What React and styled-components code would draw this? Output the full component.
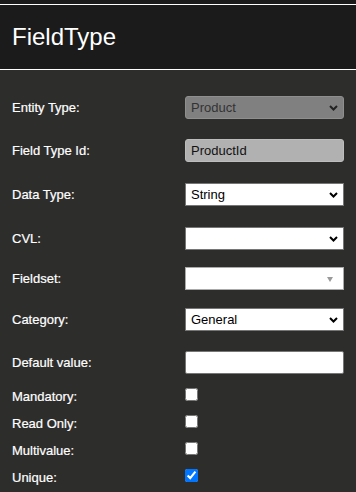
import React from 'react';
import styled, { createGlobalStyle } from 'styled-components';

const GlobalStyle = createGlobalStyle`
  html, body {
    margin: 0;
    padding: 0;
    background: #2d2d2b;
  }
  body {
    font-family: 'Liberation Sans', Arial, sans-serif;
    font-size: 13px;
    color: #fff;
  }
`;

const Page = styled.div`
  width: 356px;
  min-height: 492px;
  background: #2d2d2b;
  padding-top: 4px;
  box-sizing: border-box;
  background-image: linear-gradient(#1b1b1b, #1b1b1b);
  background-size: 100% 4px;
  background-repeat: no-repeat;
`;

const Header = styled.header`
  height: 64px;
  display: flex;
  align-items: center;
  padding: 0 12px;
  background: #1b1b1b;
  border-top: 1px solid #fff;
  border-bottom: 1px solid #fff;

  h1 {
    margin: 0;
    font-size: 24px;
    font-weight: normal;
    color: #fff;
  }
`;

const Form = styled.form`
  padding: 26px 12px 0 12px;
  display: flex;
  flex-direction: column;
`;

const Row = styled.div`
  display: flex;
  align-items: center;
  height: ${(p) => p.$height || 23}px;
  margin-top: ${(p) => p.$top || 0}px;
`;

const Label = styled.label`
  width: 173px;
  flex: none;
  color: #fff;
  padding-top: ${(p) => p.$shift || 0}px;
  -webkit-text-stroke: 0.2px #fff;
`;

const SelectBox = styled.div`
  position: relative;
  width: 159px;
  height: 23px;

  svg {
    position: absolute;
    right: 6px;
    top: 9px;
    pointer-events: none;
  }
`;

const Select = styled.select`
  appearance: none;
  width: 100%;
  height: 100%;
  box-sizing: border-box;
  margin: 0;
  padding: 0 20px 0 5px;
  font-family: 'Liberation Sans', Arial, sans-serif;
  font-size: 13px;
  color: #000;
  background: #fff;
  border: 1px solid #767676;
  border-radius: 0;
  outline: none;
`;

const LockedValue = styled.div`
  display: flex;
  align-items: center;
  width: 100%;
  height: 100%;
  box-sizing: border-box;
  padding: 0 20px 0 5px;
  font-size: 13px;
  color: #333;
  background: #808080;
  border: 1px solid #8f8f8f;
  border-radius: 3px;
`;

const TextInput = styled.input`
  width: 159px;
  height: 23px;
  box-sizing: border-box;
  margin: 0;
  padding: 0 5px;
  font-family: 'Liberation Sans', Arial, sans-serif;
  font-size: 13px;
  color: #111;
  background: ${(p) => (p.readOnly ? '#b1b1b1' : '#fff')};
  border: 1px solid ${(p) => (p.readOnly ? '#bdbdbd' : '#767676')};
  border-radius: ${(p) => (p.readOnly ? 3 : 2)}px;
  outline: none;
`;

const ChosenBox = styled.div`
  position: relative;
  width: 159px;
  height: 23px;
  box-sizing: border-box;
  background: #fff;
  border: 1px solid #aaa;

  &::after {
    content: '';
    position: absolute;
    right: 10px;
    top: 9px;
    border-left: 3px solid transparent;
    border-right: 3px solid transparent;
    border-top: 5px solid #9a9a9a;
  }
`;

const Check = styled.input`
  width: 13px;
  height: 13px;
  margin: 0;
  accent-color: #0075ff;
`;

const Chevron = ({ color }) => (
  <svg width="9" height="6" viewBox="0 0 9 6">
    <path d="M1 1 L4.5 4.5 L8 1" fill="none" stroke={color} strokeWidth="2" />
  </svg>
);

const Dropdown = ({ value, locked, options = [] }) => (
  <SelectBox>
    {locked ? (
      <LockedValue aria-disabled="true">{value}</LockedValue>
    ) : (
      <Select defaultValue={value}>
        {options.map((o) => (
          <option key={o} value={o}>
            {o}
          </option>
        ))}
      </Select>
    )}
    <Chevron color={locked ? '#222' : '#000'} />
  </SelectBox>
);

const checks = [
  { label: 'Mandatory:', checked: false },
  { label: 'Read Only:', checked: false },
  { label: 'Multivalue:', checked: false },
  { label: 'Unique:', checked: true },
];

export default function App() {
  return (
    <Page>
      <GlobalStyle />
      <Header>
        <h1>FieldType</h1>
      </Header>
      <Form>
        <Row>
          <Label>Entity Type:</Label>
          <Dropdown locked value="Product" />
        </Row>
        <Row $top={20}>
          <Label>Field Type Id:</Label>
          <TextInput readOnly defaultValue="ProductId" />
        </Row>
        <Row $top={21}>
          <Label>Data Type:</Label>
          <Dropdown value="String" options={['String', 'Integer', 'Double', 'Boolean', 'DateTime', 'CVL']} />
        </Row>
        <Row $top={21}>
          <Label>CVL:</Label>
          <Dropdown value="" options={['']} />
        </Row>
        <Row $top={17}>
          <Label>Fieldset:</Label>
          <ChosenBox />
        </Row>
        <Row $top={18}>
          <Label>Category:</Label>
          <Dropdown value="General" options={['General']} />
        </Row>
        <Row $top={20}>
          <Label>Default value:</Label>
          <TextInput defaultValue="" />
        </Row>
        <div style={{ height: 7 }} />
        {checks.map((c) => (
          <Row key={c.label} $height={27}>
            <Label $shift={3}>{c.label}</Label>
            <Check type="checkbox" defaultChecked={c.checked} />
          </Row>
        ))}
      </Form>
    </Page>
  );
}
